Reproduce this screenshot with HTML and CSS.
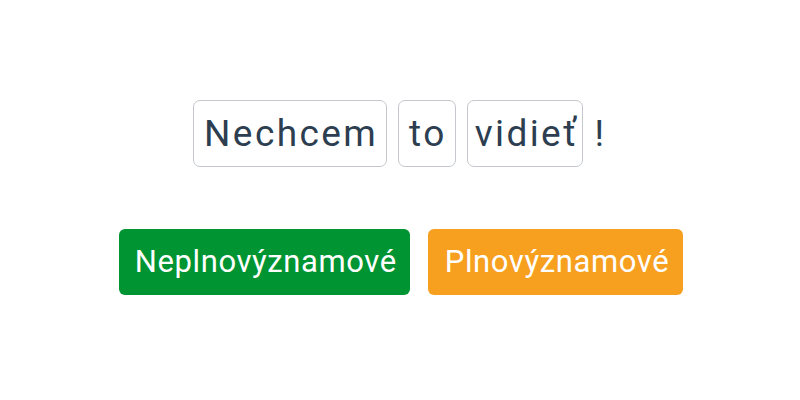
FILE: index.html
```html
<!DOCTYPE html>
<html lang="sk">
<head>
<meta charset="utf-8">
<link rel="stylesheet" href="styles.css">
</head>
<body>
<div class="app">
  <div class="sentence">
    <span class="word">Nechcem</span>
    <span class="word">to</span>
    <span class="word word-last">vidieť</span>
    <span class="punct">!</span>
  </div>
  <div class="actions">
    <button class="btn btn-green">Neplnovýznamové</button>
    <button class="btn btn-orange">Plnovýznamové</button>
  </div>
</div>
</body>
</html>
```
FILE: styles.css
```css
html, body {
  margin: 0;
  padding: 0;
  background: #ffffff;
}
body {
  font-family: Roboto, "Liberation Sans", sans-serif;
  color: #2c3e50;
}
.app {
  width: 800px;
  height: 400px;
  display: flex;
  flex-direction: column;
  align-items: center;
  padding-top: 100px;
  box-sizing: border-box;
}
.sentence {
  display: flex;
  align-items: center;
  gap: 11px;
  margin-left: -3px;
}
.word {
  display: inline-block;
  font-size: 37px;
  letter-spacing: 2.4px;
  line-height: 65px;
  padding: 0 8px 0 10px;
  border: 1px solid #c4c8cc;
  border-radius: 7px;
}
.word-last {
  padding: 0 4px 0 7px;
}
.punct {
  font-size: 37px;
  line-height: 65px;
  margin-left: 0;
}
.actions {
  display: flex;
  gap: 18px;
  margin-top: 62px;
  margin-left: 2px;
}
.btn {
  font-family: Roboto, "Liberation Sans", sans-serif;
  font-size: 31px;
  letter-spacing: 0.6px;
  color: #ffffff;
  border: none;
  border-radius: 6px;
  height: 66px;
  padding: 0 14px 2px 17px;
  cursor: pointer;
}
.btn-green {
  background: #009432;
  padding-left: 16px;
  padding-right: 13px;
}
.btn-orange { background: #f79f1f; }
```
